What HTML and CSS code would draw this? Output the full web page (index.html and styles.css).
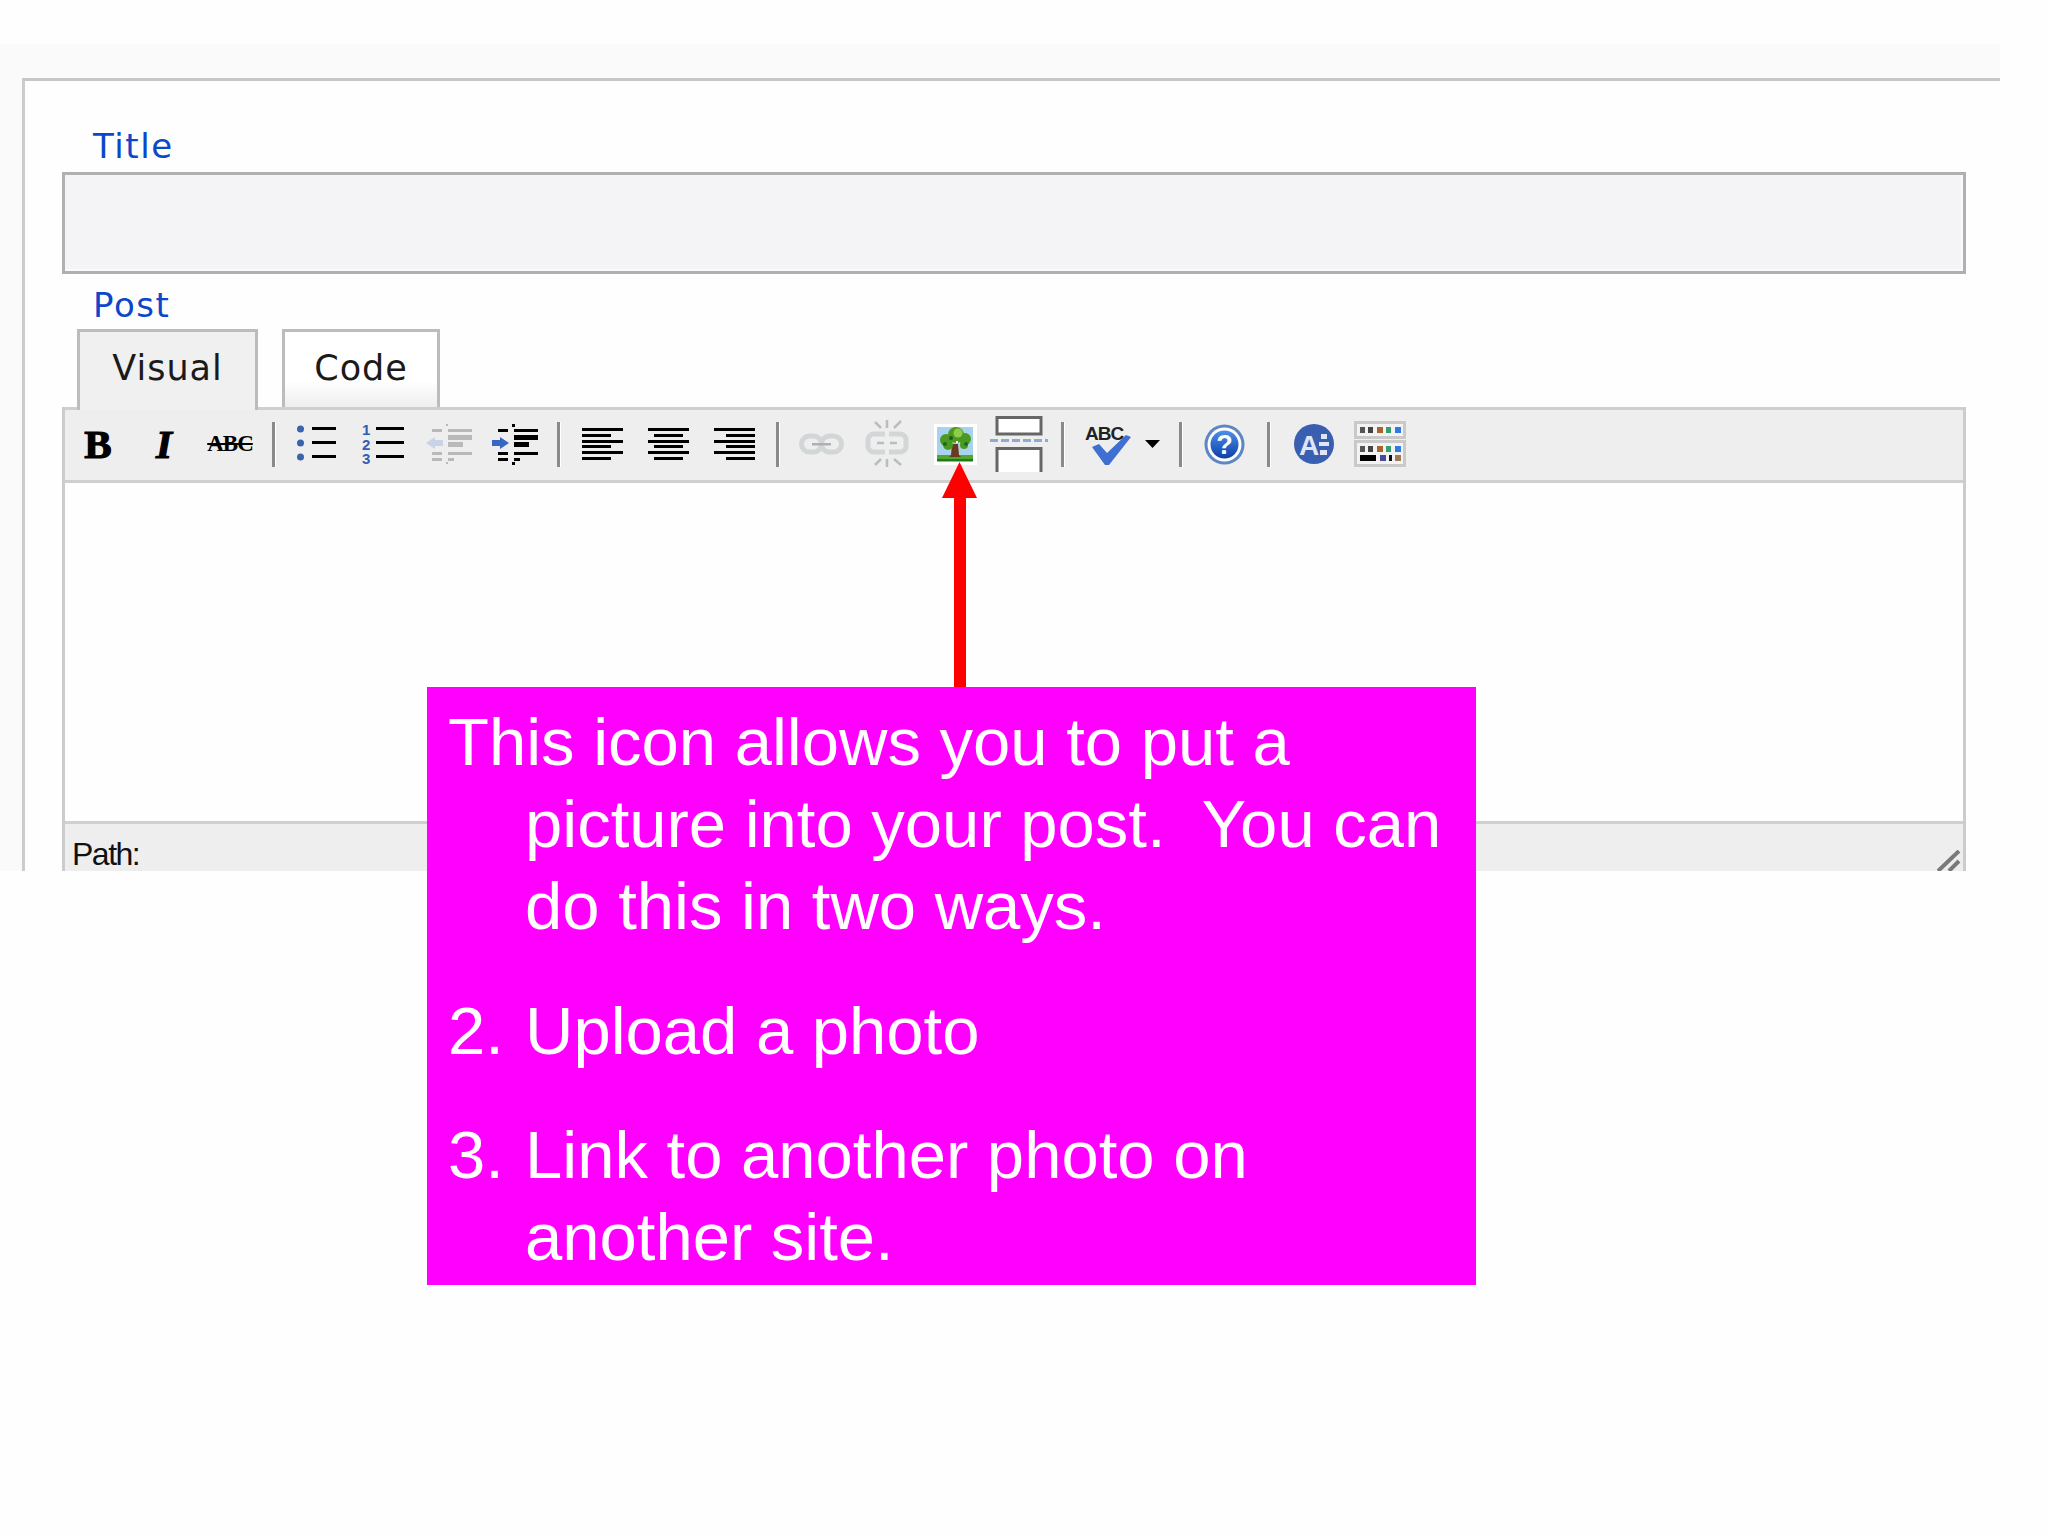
FILE: index.html
```html
<!DOCTYPE html>
<html lang="en">
<head>
<meta charset="utf-8">
<title>Post editor</title>
<link rel="stylesheet" href="styles.css">
</head>
<body>
<main class="page">
  <div class="frame">
    <form class="panel">
      <div class="label label-title">Title</div>
      <div class="input"></div>
      <div class="label label-post">Post</div>
      <div class="tabs">
        <div class="tab tab-visual"><span>Visual</span></div>
        <div class="tab tab-code"><span>Code</span></div>
      </div>
      <div class="editor">
        <div class="toolbar">
          <div class="tool"><span class="glyph-b">B</span></div>
          <div class="tool"><span class="glyph-i">I</span></div>
          <div class="tool"><span class="glyph-abc">ABC</span></div>
          <div class="sep"></div>
          <div class="tool">
            <svg width="40" height="38" viewBox="0 0 40 38"><g fill="#3a62ad"><circle cx="3.500" cy="4" r="3.500"/><circle cx="3.500" cy="18" r="3.500"/><circle cx="3.500" cy="32" r="3.500"/></g><g fill="#000"><rect x="15" y="2" width="24" height="3"/><rect x="15" y="16" width="24" height="3"/><rect x="15" y="30" width="24" height="3"/></g></svg>
          </div>
          <div class="tool">
            <svg width="42" height="42" viewBox="0 0 42 42"><g fill="#2f5fb5" font-family="Liberation Sans" font-weight="700" font-size="15"><text x="0" y="12">1</text><text x="0" y="27">2</text><text x="0" y="41">3</text></g><g fill="#000"><rect x="14" y="4" width="28" height="3"/><rect x="14" y="18" width="28" height="3"/><rect x="14" y="32" width="28" height="3"/></g></svg>
          </div>
          <div class="tool">
            <svg width="46" height="42" viewBox="0 0 46 42"><g fill="#b9b9b9"><rect x="6" y="6" width="10" height="3"/><rect x="22" y="6" width="24" height="3"/><rect x="22" y="12" width="24" height="5"/><rect x="22" y="19" width="15" height="5"/><rect x="6" y="29" width="10" height="3"/><rect x="22" y="29" width="24" height="3"/><rect x="6" y="35" width="10" height="3"/><rect x="22" y="35" width="6" height="3"/><rect x="20" y="1" width="2" height="2"/><rect x="20" y="39" width="2" height="2"/></g><path d="M0 20l9-6v3h8v6H9v3z" fill="#c9d3e6"/></svg>
          </div>
          <div class="tool">
            <svg width="46" height="42" viewBox="0 0 46 42"><g fill="#000"><rect x="6" y="6" width="10" height="3"/><rect x="22" y="6" width="24" height="3"/><rect x="22" y="12" width="24" height="5"/><rect x="22" y="19" width="15" height="5"/><rect x="6" y="29" width="10" height="3"/><rect x="22" y="29" width="24" height="3"/><rect x="6" y="35" width="10" height="3"/><rect x="22" y="35" width="6" height="3"/><rect x="20" y="1" width="3" height="3"/><rect x="20" y="39" width="3" height="3"/></g><path d="M17 20l-9-6v3H0v6h8v3z" fill="#3567c4"/></svg>
          </div>
          <div class="sep"></div>
          <div class="tool">
            <svg width="41" height="32" viewBox="0 0 41 32"><g fill="#000"><rect y="0" width="41" height="3"/><rect y="6" width="29" height="3"/><rect y="12" width="41" height="3"/><rect y="17" width="29" height="3"/><rect y="23" width="41" height="3"/><rect y="29" width="29" height="3"/></g></svg>
          </div>
          <div class="tool">
            <svg width="41" height="32" viewBox="0 0 41 32"><g fill="#000"><rect y="0" width="41" height="3"/><rect x="6" y="6" width="29" height="3"/><rect y="12" width="41" height="3"/><rect x="6" y="17" width="29" height="3"/><rect y="23" width="41" height="3"/><rect x="6" y="29" width="29" height="3"/></g></svg>
          </div>
          <div class="tool">
            <svg width="41" height="32" viewBox="0 0 41 32"><g fill="#000"><rect y="0" width="41" height="3"/><rect x="12" y="6" width="29" height="3"/><rect y="12" width="41" height="3"/><rect x="12" y="17" width="29" height="3"/><rect y="23" width="41" height="3"/><rect x="12" y="29" width="29" height="3"/></g></svg>
          </div>
          <div class="sep"></div>
          <div class="tool">
            <svg width="45" height="22" viewBox="0 0 45 22"><g fill="none" stroke="#d3d6d7" stroke-width="5"><rect x="2.500" y="3" width="20" height="16" rx="8"/><rect x="22.500" y="3" width="20" height="16" rx="8"/></g><rect x="13" y="10" width="19" height="2.500" fill="#adb1b2"/></svg>
          </div>
          <div class="tool">
            <svg width="44" height="48" viewBox="0 0 44 48"><g fill="none" stroke="#d3d6d7" stroke-width="5"><path d="M20 14H9a6 6 0 0 0-6 7v4a6 6 0 0 0 6 7h11"/><path d="M24 14h11a6 6 0 0 1 6 7v4a6 6 0 0 1-6 7H24"/></g><g fill="none" stroke="#b9bdbe" stroke-width="2.500"><path d="M12 23h7M25 23h7"/><path d="M10 2l6 6M22 0v8M36 1l-7 7M10 45l6-6M22 47v-8M36 45l-7-6"/></g></svg>
          </div>
          <div class="tool tool-image">
            <svg width="43" height="41" viewBox="0 0 43 41"><rect width="43" height="41" fill="#fff"/><rect x="3" y="3" width="36" height="28" fill="#a9d2ee"/><rect x="3" y="31" width="36" height="6" fill="#4fa82a"/><rect x="3" y="35" width="36" height="2.500" fill="#1f7a17"/><path d="M18 20h6l1 11 2 2H15l2-2z" fill="#6b3a1e"/><g fill="#4a9a22"><circle cx="22" cy="11" r="8"/><circle cx="12" cy="16" r="6"/><circle cx="31" cy="15" r="6"/><circle cx="14" cy="21" r="5"/><circle cx="30" cy="21" r="4"/></g><circle cx="24" cy="9" r="4.500" fill="#8fcc4a"/><circle cx="17" cy="14" r="2" fill="#1c5c16"/><circle cx="32" cy="20" r="2" fill="#1f6a17"/><circle cx="11" cy="20" r="2" fill="#1f6a17"/><rect x="22" y="17" width="2" height="2" fill="#fff"/></svg>
          </div>
          <div class="tool">
            <svg width="58" height="56" viewBox="0 0 58 56"><path d="M7 1.500h44V18H7z" fill="#fff" stroke="#666" stroke-width="3"/><path d="M7 56V32.500h44V56" fill="#fff" stroke="#666" stroke-width="3"/><path d="M0 24.500h58" stroke="#8eabcf" stroke-width="3" stroke-dasharray="8 3"/></svg>
          </div>
          <div class="sep"></div>
          <div class="tool tool-split">
            <div class="spell">
              <svg class="spell-check" width="40" height="30" viewBox="0 0 40 30"><path d="M0 12l7-3 8 9L34 0l5 2-22 28h-4z" fill="#3f6fd0"/></svg>
              <span class="spell-text">ABC</span>
            </div>
            <svg width="15" height="8" viewBox="0 0 15 8"><path d="M0 0h15L7.500 8z" fill="#000"/></svg>
          </div>
          <div class="sep"></div>
          <div class="tool tool-help">
            <svg width="41" height="41" viewBox="0 0 41 41"><defs><linearGradient id="helpfill" x1="0" y1="0" x2="0" y2="1"><stop offset="0" stop-color="#4d8fe8"/><stop offset="1" stop-color="#0d3fa8"/></linearGradient></defs><circle cx="20.500" cy="20.500" r="20" fill="#5d86c4"/><circle cx="20.500" cy="20.500" r="17" fill="#fff"/><circle cx="20.500" cy="20.500" r="14" fill="url(#helpfill)"/><text x="20.500" y="30" text-anchor="middle" font-family="Liberation Sans" font-weight="700" font-size="27" fill="#fff">?</text></svg>
          </div>
          <div class="sep"></div>
          <div class="tool tool-kitchen">
            <svg width="40" height="40" viewBox="0 0 40 40"><circle cx="20" cy="20" r="20" fill="#3a5eb0"/><text x="5" y="31" font-family="Liberation Sans" font-weight="700" font-size="28" fill="#dfe6f5">A</text><g fill="#dfe6f5"><rect x="27" y="10" width="6" height="5"/><rect x="25" y="18" width="10" height="4"/><rect x="26" y="26" width="7" height="5"/></g></svg>
          </div>
          <div class="tool">
            <svg width="52" height="46" viewBox="0 0 52 46"><rect x="1.500" y="1.500" width="49" height="15" fill="#f3f3f3" stroke="#c9c9c9" stroke-width="3"/><rect x="1.500" y="20.500" width="49" height="24" fill="#f3f3f3" stroke="#c9c9c9" stroke-width="3"/><g><rect x="6" y="6" width="5" height="6" fill="#555"/><rect x="14" y="6" width="5" height="6" fill="#444"/><rect x="23" y="6" width="6" height="6" fill="#a8642f"/><rect x="32" y="6" width="5" height="6" fill="#34a070"/><rect x="41" y="6" width="6" height="6" fill="#2f7be0"/><rect x="6" y="25" width="5" height="6" fill="#555"/><rect x="14" y="25" width="5" height="6" fill="#444"/><rect x="23" y="25" width="6" height="6" fill="#a8642f"/><rect x="32" y="25" width="5" height="6" fill="#34a070"/><rect x="41" y="25" width="6" height="6" fill="#2f7be0"/><rect x="6" y="34" width="16" height="6" fill="#000"/><rect x="26" y="34" width="6" height="6" fill="#4a4a9a"/><rect x="35" y="34" width="3" height="6" fill="#111"/><rect x="41" y="34" width="6" height="6" fill="#a07a55"/></g></svg>
          </div>
        </div>
        <div class="body"></div>
        <div class="status">
          <span class="path">Path:</span>
          <svg class="grip" width="24" height="21" viewBox="0 0 24 21"><g stroke="#7a7a7a" stroke-width="4"><path d="M1 21L22 1M12 21l10-10"/></g></svg>
        </div>
      </div>
    </form>
  </div>

  <svg class="arrow" width="36" height="225" viewBox="0 0 36 225"><path d="M17.500 0L35 36H24V225H12V36H0z" fill="#ff0000"/></svg>

  <aside class="callout">
    <p class="item">This icon allows you to put a picture into your post.&nbsp; You can do this in two ways.</p>
    <p class="item item-gap"><span class="marker">2.</span><span>Upload a photo</span></p>
    <p class="item item-gap"><span class="marker">3.</span><span>Link to another photo on another site.</span></p>
  </aside>
</main>
</body>
</html>
```
FILE: styles.css
```css
html, body {
  margin: 0;
  padding: 0;
  background: #fefefe;
}

.page {
  position: relative;
  width: 2048px;
  height: 1536px;
  padding-top: 44px;
  box-sizing: border-box;
  overflow: hidden;
}

.frame {
  width: 2000px;
  height: 827px;
  padding: 34px 0 0 22px;
  box-sizing: border-box;
  background: #fafafa;
  overflow: hidden;
}

.panel {
  display: block;
  height: 793px;
  padding: 48px 34px 0 37px;
  box-sizing: border-box;
  border-top: 3px solid #c6c6c6;
  border-left: 3px solid #cccccc;
  background: #fefefe;
}

.label {
  font-family: "DejaVu Sans", sans-serif;
  font-size: 34px;
  letter-spacing: 1.6px;
  color: #0b47c9;
}

.label-title {
  height: 43px;
  line-height: 34px;
  padding-left: 31px;
}

.label-post {
  height: 55px;
  box-sizing: border-box;
  padding: 11px 0 0 31px;
  line-height: 40px;
}

.input {
  height: 102px;
  box-sizing: border-box;
  border: 3px solid #b0b0b2;
  background: #f4f3f5;
  box-shadow: inset -2px -2px 0 #fafafa;
}

.tabs {
  display: flex;
  gap: 24px;
  height: 78px;
  padding-left: 15px;
}

.tab {
  display: flex;
  justify-content: center;
  height: 78px;
  padding-top: 3px;
  box-sizing: border-box;
  border: 3px solid #bcbcbc;
  border-bottom: 0;
  font-family: "DejaVu Sans", sans-serif;
  font-size: 35px;
  letter-spacing: 1px;
  line-height: 66px;
  color: #1a1a1a;
}

.tab-visual {
  position: relative;
  z-index: 1;
  width: 181px;
  height: 81px;
  background: #f0f0f0;
}

.tab-code {
  width: 158px;
  background: linear-gradient(#ffffff 65%, #eeeeee 100%);
}

.editor {
  border-left: 3px solid #cccccc;
  border-right: 3px solid #cccccc;
}

.toolbar {
  display: flex;
  align-items: center;
  height: 76px;
  padding-bottom: 2px;
  box-sizing: border-box;
  border-top: 3px solid #cfcfcf;
  border-bottom: 3px solid #cfcfcf;
  background: #efeeef;
}

.tool {
  flex: none;
  display: flex;
  align-items: center;
  justify-content: center;
  width: 66px;
  height: 56px;
}

.tool-image {
  margin: 0 -2px 0 2px;
}

.tool-split {
  width: 97px;
  justify-content: flex-start;
  gap: 13px;
  padding-left: 12px;
  box-sizing: border-box;
}

.tool-help {
  width: 67px;
}

.tool-kitchen {
  margin-left: 2px;
}

.sep {
  flex: none;
  width: 3px;
  height: 45px;
  margin: 0 9px;
  background: #8a8a8a;
  box-shadow: 1px 0 0 #ffffff;
}

.glyph-b,
.glyph-i,
.glyph-abc {
  font-family: "Liberation Serif", serif;
  font-weight: 700;
  color: #000;
}

.glyph-b {
  font-size: 41px;
  line-height: 1;
  -webkit-text-stroke: 1.2px #000;
}

.glyph-i {
  font-size: 41px;
  font-style: italic;
  line-height: 1;
  -webkit-text-stroke: 1.2px #000;
}

.glyph-abc {
  font-size: 23px;
  letter-spacing: -1px;
  text-decoration: line-through;
}

.spell {
  position: relative;
  width: 47px;
  height: 42px;
}

.spell-check {
  position: absolute;
  right: 0;
  bottom: 0;
}

.spell-text {
  position: absolute;
  left: 0;
  top: 0;
  font-family: "Liberation Sans", sans-serif;
  font-size: 19px;
  font-weight: 700;
  letter-spacing: -1px;
  color: #222;
}

.body {
  height: 338px;
  background: #fefefe;
}

.status {
  display: flex;
  justify-content: space-between;
  height: 50px;
  box-sizing: border-box;
  border-top: 3px solid #d0d0d0;
  padding: 13px 2px 0 7px;
  background: #efeeef;
}

.path {
  font-family: "Liberation Sans", sans-serif;
  font-size: 32px;
  letter-spacing: -1.5px;
  line-height: 34px;
  color: #111;
}

.grip {
  display: block;
  align-self: flex-end;
}

.arrow {
  position: absolute;
  left: 942px;
  top: 462px;
}

.callout {
  position: absolute;
  left: 427px;
  top: 687px;
  width: 1049px;
  height: 598px;
  padding: 14px 20px 0 21px;
  box-sizing: border-box;
  background: #ff00ff;
  font-family: "Liberation Sans", sans-serif;
  font-size: 67px;
  line-height: 82px;
  color: #ffffff;
}

.item {
  margin: 0;
  padding-left: 77px;
  text-indent: -77px;
}

.item-gap {
  display: flex;
  margin-top: 42.500px;
  padding-left: 0;
  text-indent: 0;
}

.marker {
  flex: none;
  width: 77px;
}
```
